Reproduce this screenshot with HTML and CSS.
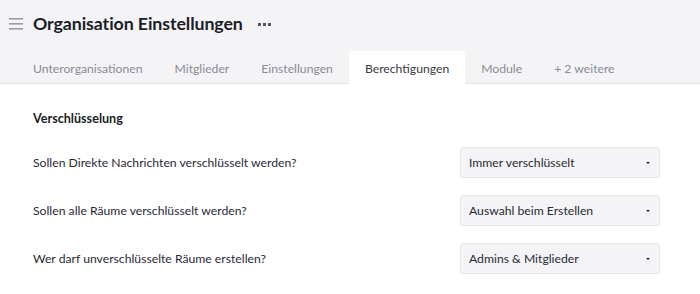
FILE: index.html
```html
<!DOCTYPE html>
<html lang="de">
<head>
<meta charset="utf-8">
<link rel="stylesheet" href="styles.css">
</head>
<body>
<header class="header">
  <div class="title-row">
    <span class="menu-icon">
      <svg width="14" height="12" viewBox="0 0 14 12"><rect x="0" y="0" width="14" height="1.6" fill="#9a9aa2"/><rect x="0" y="5" width="14" height="1.6" fill="#9a9aa2"/><rect x="0" y="10" width="14" height="1.6" fill="#9a9aa2"/></svg>
    </span>
    <h1 class="title">Organisation Einstellungen</h1>
    <span class="more">
      <svg width="13" height="4" viewBox="0 0 13 4"><rect x="0" y="0" width="3" height="3" fill="#55555c"/><rect x="5" y="0" width="3" height="3" fill="#55555c"/><rect x="10" y="0" width="3" height="3" fill="#55555c"/></svg>
    </span>
  </div>
  <nav class="tabs">
    <span class="tab">Unterorganisationen</span>
    <span class="tab">Mitglieder</span>
    <span class="tab">Einstellungen</span>
    <span class="tab active">Berechtigungen</span>
    <span class="tab">Module</span>
    <span class="tab">+ 2 weitere</span>
  </nav>
</header>
<main class="content">
  <h2 class="section-title">Verschlüsselung</h2>
  <div class="row">
    <span class="label">Sollen Direkte Nachrichten verschlüsselt werden?</span>
    <div class="select"><span>Immer verschlüsselt</span><span class="caret"></span></div>
  </div>
  <div class="row">
    <span class="label">Sollen alle Räume verschlüsselt werden?</span>
    <div class="select"><span>Auswahl beim Erstellen</span><span class="caret"></span></div>
  </div>
  <div class="row">
    <span class="label">Wer darf unverschlüsselte Räume erstellen?</span>
    <div class="select"><span>Admins &amp; Mitglieder</span><span class="caret"></span></div>
  </div>
</main>
</body>
</html>
```
FILE: styles.css
```css
html, body {
  margin: 0;
  padding: 0;
  background: #ffffff;
  font-family: "Lato", "Noto Sans", sans-serif;
  color: #23232b;
}
.header {
  background: #f4f4f6;
  border-bottom: 1px solid #e3e3e8;
  height: 83px;
}
.title-row {
  display: flex;
  align-items: center;
  height: 46px;
  padding-left: 9px;
}
.menu-icon {
  display: flex;
  width: 14px;
  margin-right: 10px;
  margin-top: 1px;
}
.title {
  margin: 0;
  font-size: 17.8px;
  font-weight: 700;
  color: #1a1d26;
  letter-spacing: -0.1px;
}
.more {
  display: flex;
  margin-left: 15px;
  margin-top: 3px;
}
.tabs {
  display: flex;
  padding-left: 17px;
  margin-top: 5px;
  height: 33px;
}
.tab {
  display: flex;
  align-items: center;
  padding: 2px 16px 0;
  font-size: 12.2px;
  color: #8a8a98;
  border-radius: 3px 3px 0 0;
}
.tab.active {
  background: #ffffff;
  color: #3a3a44;
}
.content {
  padding: 0 40px 0 33px;
}
.section-title {
  margin: 0;
  padding-top: 26px;
  font-size: 12.6px;
  font-weight: 700;
  color: #1a1d26;
  line-height: 18px;
}
.row {
  display: flex;
  align-items: center;
  justify-content: space-between;
  height: 31px;
  margin-top: 17px;
}
.section-title + .row {
  margin-top: 19px;
}
.label {
  font-size: 12.2px;
  color: #2a2a35;
}
.select {
  box-sizing: border-box;
  width: 200px;
  height: 31px;
  display: flex;
  align-items: center;
  justify-content: space-between;
  padding: 0 9px 0 8px;
  background: #f4f4f6;
  border: 1px solid #e6e6ea;
  border-radius: 3px;
  font-size: 12.2px;
  color: #2a2a35;
}
.caret {
  width: 0;
  height: 0;
  border-left: 2px solid transparent;
  border-right: 2px solid transparent;
  border-top: 2px solid #222;
}
```
